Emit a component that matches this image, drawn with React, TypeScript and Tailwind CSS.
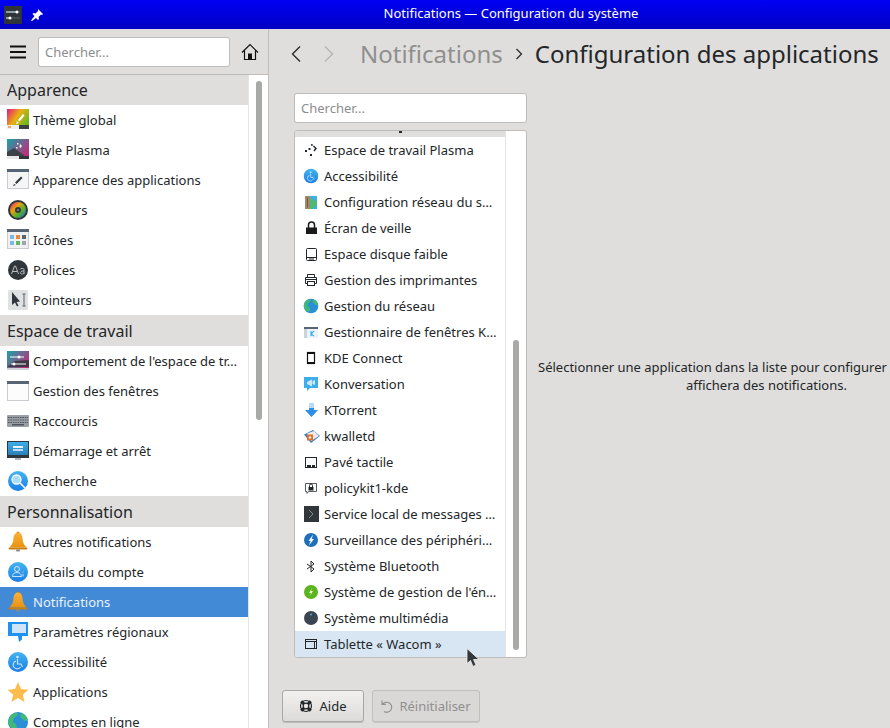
import React from "react";

type P = { children: React.ReactNode; s?: number; vb?: number };
const Svg = ({ children, s = 22, vb = 22 }: P) => (
  <svg width={s} height={s} viewBox={`0 0 ${vb} ${vb}`} className="shrink-0 block">
    {children}
  </svg>
);

const Defs = () => (
  <svg width="0" height="0" className="absolute">
    <defs>
      <linearGradient id="tg" x1="0" y1="0" x2="1" y2="0.6">
        <stop offset="0" stopColor="#e8137f" />
        <stop offset="0.5" stopColor="#e8b010" />
        <stop offset="1" stopColor="#6ab820" />
      </linearGradient>
      <linearGradient id="pl" x1="0" y1="0" x2="1" y2="0.7">
        <stop offset="0" stopColor="#17a5a8" />
        <stop offset="1" stopColor="#c22a78" />
      </linearGradient>
      <linearGradient id="bell" x1="0" y1="0" x2="0" y2="1">
        <stop offset="0" stopColor="#fbb13a" />
        <stop offset="1" stopColor="#e8920f" />
      </linearGradient>
      <linearGradient id="blue" x1="0" y1="0" x2="0" y2="1">
        <stop offset="0" stopColor="#45b4f0" />
        <stop offset="1" stopColor="#1a7ee6" />
      </linearGradient>
      <linearGradient id="screen" x1="0" y1="0" x2="0" y2="1">
        <stop offset="0" stopColor="#3daee9" />
        <stop offset="1" stopColor="#2980b9" />
      </linearGradient>
      <linearGradient id="wheel" x1="0" y1="0" x2="1" y2="1">
        <stop offset="0" stopColor="#e8137f" />
        <stop offset="0.35" stopColor="#e8a010" />
        <stop offset="0.65" stopColor="#4fb030" />
        <stop offset="1" stopColor="#2060d0" />
      </linearGradient>
    </defs>
  </svg>
);

const Bell = ({ s = 22 }: { s?: number }) => (
  <Svg s={s}>
    <circle cx="11" cy="2" r="1.500" fill="#c98010" />
    <path d="M11 1.500c-3.200 0-4.400 3-4.600 6.500-.2 3.400-1.400 6-3.900 8.500h17c-2.500-2.500-3.700-5.100-3.900-8.500C15.400 4.500 14.200 1.500 11 1.500z" fill="url(#bell)" />
    <rect x="1.500" y="16.500" width="19" height="2" rx="1" fill="#c98010" />
    <rect x="9" y="18.500" width="4" height="2" rx="1" fill="#8a8a8a" />
  </Svg>
);
const Access = ({ s = 22 }: { s?: number }) => (
  <Svg s={s}>
    <circle cx="11" cy="11" r="10" fill="url(#blue)" />
    <circle cx="10.500" cy="6" r="1.300" fill="#fff" opacity="0.75" />
    <path d="M10.500 8v5h3.500l1.500 3M9 10a4 4 0 1 0 4.500 6" fill="none" stroke="#fff" strokeWidth="1.100" opacity="0.75" />
  </Svg>
);
const Globe = ({ s = 22 }: { s?: number }) => (
  <Svg s={s}>
    <circle cx="11" cy="11" r="10" fill="#2a8fd6" />
    <path d="M3 5c3-3 6-3.500 8-3l-1 3-3 2-1 4 3 2 1 4-2 2c-4-1-7-5-7-8 0-2 1-4 2-6zM14 2c4 1 6 4 7 7l-3 1-3-2-2-3z" fill="#3fb878" />
  </Svg>
);
const Shift = ({ children }: { children: React.ReactNode }) => <span className="-ml-[1px] mr-[1px] shrink-0">{children}</span>;

const Header = ({ t, tall }: { t: string; tall?: boolean }) => (
  <div className={`bg-[#dfdedc] pl-[7px] text-[16px] text-[#232629] whitespace-nowrap ${tall ? "h-[31px] leading-[32px]" : "h-[30px] leading-[30px]"}`}>{t}</div>
);

const icons: Record<string, React.ReactNode> = {
  theme: (
    <Svg>
      <rect x="0" y="0" width="22" height="20" fill="url(#tg)" />
      <rect x="0" y="16" width="22" height="4" fill="#eeeeee" />
      <rect x="12" y="16" width="10" height="4" fill="#3a3f44" />
      <rect x="1" y="17" width="3" height="2" fill="#f4a868" />
      <path d="M10 12l2 2-3 1zM11 11l5-6 1.500 1.500-5 6z" fill="#fff" />
    </Svg>
  ),
  plasma: (
    <Svg>
      <rect x="0" y="0" width="22" height="20" fill="url(#pl)" />
      <path d="M0 20v-7l7-4 10 7-2 4z" fill="#3c4248" />
      <rect x="0" y="17" width="12" height="3" fill="#e8e8e8" />
      <rect x="12" y="17" width="10" height="3" fill="#30353a" />
      <path d="M13 5l2 2-1.500 2-1-1zM10 4h1.500v1.500H10zM9 8h1.500v1.500H9z" fill="#fff" />
    </Svg>
  ),
  apps: (
    <Svg>
      <rect x="0.500" y="0.500" width="21" height="19" fill="#f5f5f5" stroke="#c8ccd0" />
      <rect x="0" y="0" width="22" height="3" fill="#566573" />
      <path d="M7 15l2 1-3 1zM8 13.500l6-6 1.500 1.500-6 6z" fill="#33383c" />
    </Svg>
  ),
  colors: (
    <Svg>
      <circle cx="11" cy="11" r="10" fill="#31363b" />
      <circle cx="11" cy="11" r="8" fill="url(#wheel)" />
      <circle cx="11" cy="11" r="3" fill="#31363b" />
      <circle cx="11" cy="11" r="1" fill="#8a8f94" />
    </Svg>
  ),
  icones: (
    <Svg>
      <rect x="0.500" y="0.500" width="21" height="19" fill="#eff0f1" stroke="#c8ccd0" />
      <rect x="0" y="0" width="22" height="3" fill="#566573" />
      <rect x="3" y="6" width="4" height="4" fill="#7eb6e8" />
      <rect x="9" y="6" width="4" height="4" fill="#e88a3c" />
      <rect x="15" y="6" width="4" height="4" fill="#566573" />
      <rect x="3" y="12" width="4" height="4" fill="#7eb6e8" />
      <rect x="9" y="12" width="4" height="4" fill="#5fb85f" />
      <rect x="15" y="12" width="4" height="4" fill="#a0a4a8" />
    </Svg>
  ),
  fonts: (
    <Svg>
      <circle cx="11" cy="11" r="10" fill="#31363b" />
      <path d="M4.500 15l3-8h1l3 8M5.500 12.500h5M17 15v-4.500c0-1.500-3.500-1.500-4 0M17 12c-4-.500-4.500 3-2.200 3 1 0 2.200-.500 2.200-1.500" fill="none" stroke="#b8bcc0" strokeWidth="1" />
    </Svg>
  ),
  pointers: (
    <Svg>
      <rect x="1" y="1" width="20" height="20" rx="1.500" fill="#dfe1e3" />
      <path d="M5 3v13l3-2.500 2 4 1.500-1-2-3.500 3.500-.500z" fill="#31363b" />
      <path d="M15.500 5h3M17 5v12M15.500 17h3" fill="none" stroke="#5a6066" strokeWidth="1" />
    </Svg>
  ),
  behaviour: (
    <Svg>
      <rect x="0" y="1" width="22" height="19" fill="url(#pl)" />
      <path d="M0 17l8-6 14-1v7z" fill="#31363b" opacity="0.85" />
      <rect x="0" y="18" width="22" height="2" fill="#d0d4d8" />
      <path d="M3 7h14M4 14h15" stroke="#fff" strokeWidth="1" />
      <circle cx="12" cy="7" r="1.500" fill="#fff" />
      <circle cx="7" cy="14" r="1.500" fill="#fff" />
    </Svg>
  ),
  windows: (
    <Svg>
      <rect x="0.500" y="1.500" width="21" height="19" fill="#fcfcfc" stroke="#c8ccd0" />
      <rect x="0" y="1" width="22" height="3" fill="#566573" />
    </Svg>
  ),
  keys: (
    <Svg>
      <rect x="0" y="5" width="22" height="12" rx="1" fill="#9aa0a6" />
      <path d="M1 7.500h20M1 10h20M1 12.500h20" stroke="#50565c" strokeWidth="1.200" strokeDasharray="1.600 .8" />
      <rect x="5" y="14" width="12" height="1.500" fill="#50565c" />
    </Svg>
  ),
  startup: (
    <Svg>
      <rect x="0" y="1" width="22" height="15" fill="#31363b" />
      <rect x="1" y="2" width="20" height="13" fill="url(#screen)" />
      <rect x="6" y="6" width="10" height="2" fill="#eaf4fb" />
      <rect x="6" y="9" width="10" height="2" fill="#b9dcf2" />
      <rect x="0" y="16" width="22" height="2" fill="#31363b" />
      <rect x="8" y="18" width="6" height="2" fill="#b0b4b8" />
    </Svg>
  ),
  search: (
    <Svg>
      <circle cx="11" cy="11" r="10" fill="url(#blue)" />
      <circle cx="9.500" cy="9.500" r="4.500" fill="#a8dcf8" stroke="#fff" strokeWidth="1.300" />
      <path d="M13 13l5 5" stroke="#fff" strokeWidth="1.600" />
    </Svg>
  ),
  account: (
    <Svg>
      <circle cx="11" cy="11" r="10" fill="url(#blue)" />
      <circle cx="10" cy="8" r="2.500" fill="none" stroke="#fff" strokeWidth="1" opacity="0.75" />
      <path d="M5.500 15.500c0-3 2-4 4.500-4s4 1 4.500 4z" fill="none" stroke="#fff" strokeWidth="1" opacity="0.75" />
      <path d="M16 10.500v1M16 13v2.500" stroke="#fff" strokeWidth="1" opacity="0.75" />
    </Svg>
  ),
  regional: (
    <Svg>
      <path d="M1 1h20v14h-6v3.500L12 21l-1-6H1z" fill="#1e92ee" />
      <rect x="5" y="3" width="14" height="9" fill="#cfe4f7" />
    </Svg>
  ),
  star: (
    <Svg>
      <path d="M11 1l3 7 7.500.700-5.700 5 1.800 7.300L11 17l-6.600 4 1.800-7.300-5.700-5L8 8z" fill="#fdbc4b" />
    </Svg>
  ),
  plasmaSmall: (
    <Svg s={16} vb={16}>
      <path d="M7 2l2 .500-.500 1.500L7 3.500zM10 3.500L13 6.500 10.500 9.500l-1-1L11 6.500 9 4.500zM4.500 6H6.500v2h-2zM1 8h2v2H1zM6 12h2v2H6z" fill="#232629" />
    </Svg>
  ),
  netcfg: (
    <Svg s={16} vb={16}>
      <rect x="1" y="2" width="5" height="13" fill="#a58a6a" />
      <rect x="6" y="2" width="7" height="13" fill="#3daee9" />
      <path d="M6 4l7 3v4l-4 4H6z" fill="#4cb87a" />
      <path d="M3 3.500h1v10H3z" fill="#6e5a42" />
    </Svg>
  ),
  lock: (
    <Svg s={16} vb={16}>
      <rect x="2" y="7.500" width="11" height="6.500" fill="#1a1a1a" />
      <path d="M4.500 8V5a3 3 0 0 1 6 0v3" fill="none" stroke="#1a1a1a" strokeWidth="1.500" />
    </Svg>
  ),
  disk: (
    <Svg s={16} vb={16}>
      <rect x="2.500" y="2.500" width="10" height="12" rx="1" fill="none" stroke="#232629" />
      <path d="M3 11.500h9" stroke="#232629" />
      <rect x="5" y="12.500" width="5" height="1" fill="#232629" />
    </Svg>
  ),
  printer: (
    <Svg s={16} vb={16}>
      <path d="M3.500 5.500v-3h7v3M3.500 11.500h-2v-6h11v6h-2" fill="none" stroke="#232629" />
      <rect x="3.500" y="9.500" width="7" height="4" fill="none" stroke="#232629" />
      <path d="M1.500 7.500h11" stroke="#232629" />
    </Svg>
  ),
  kwin: (
    <Svg s={16} vb={16}>
      <rect x="0" y="3" width="14" height="11" fill="#eaf3fa" />
      <rect x="0" y="3" width="14" height="2" fill="#566573" />
      <path d="M0 5h3v9H0z" fill="#c8d4dc" />
      <path d="M7 7v5M7 10l3-3M7 10l3 2" stroke="#3daee9" strokeWidth="1.100" fill="none" />
    </Svg>
  ),
  phone: (
    <Svg s={16} vb={16}>
      <rect x="3.500" y="2.500" width="7" height="11" fill="none" stroke="#111" strokeWidth="1.200" />
      <rect x="3" y="2" width="8" height="2" fill="#111" />
      <rect x="3" y="12" width="8" height="2" fill="#111" />
    </Svg>
  ),
  konv: (
    <Svg s={16} vb={16}>
      <path d="M0 1h14v11H6l-3 3v-3H0z" fill="#3daee9" />
      <path d="M3 6l5-2.500v7L3 8zM8.500 5L11 4v5L8.500 8z" fill="#cde8f8" />
    </Svg>
  ),
  torrent: (
    <Svg s={16} vb={16}>
      <rect x="5" y="1" width="5" height="6" fill="#b8dcf4" />
      <path d="M1 8h4V6h5v2h4l-6.500 7z" fill="#2c8ee8" />
    </Svg>
  ),
  wallet: (
    <Svg s={16} vb={16}>
      <path d="M0 6.500L9 2l7 6-9 7z" fill="#3a80c8" />
      <path d="M3 5.500L10 3l5 5-8 5z" fill="#f0ece4" />
      <rect x="3" y="6.500" width="6" height="6" fill="#e07030" />
      <circle cx="6" cy="9.500" r="1.200" fill="#f0ece4" />
    </Svg>
  ),
  touchpad: (
    <Svg s={16} vb={16}>
      <rect x="1.500" y="3.500" width="11" height="10" fill="none" stroke="#232629" />
      <rect x="3" y="11" width="4" height="2" fill="#232629" />
      <rect x="8" y="11" width="3" height="2" fill="#232629" />
    </Svg>
  ),
  policy: (
    <Svg s={16} vb={16}>
      <path d="M1.500 3.500h11v8h-8l-1.500 2v-2H1.500z" fill="none" stroke="#555a60" />
      <rect x="4.500" y="7" width="5" height="3.500" fill="#232629" />
      <path d="M5.500 7V5.500a1.500 1.500 0 0 1 3 0V7" fill="none" stroke="#232629" />
    </Svg>
  ),
  terminal: (
    <Svg s={16} vb={16}>
      <rect x="-1" y="0" width="16" height="16" fill="#31363b" />
      <path d="M5 4l4 4-4 4" fill="none" stroke="#7f8c8d" strokeWidth="1" />
    </Svg>
  ),
  thunder: (
    <Svg s={16} vb={16}>
      <circle cx="7" cy="8" r="7" fill="#1c6fb8" />
      <path d="M9 2.500L4.500 9h2L5 13.500 10 7H7.800z" fill="#f4f8fb" />
    </Svg>
  ),
  bt: (
    <Svg s={16} vb={16}>
      <path d="M3 6l7 5-3 3V3l3 3-7 5" fill="none" stroke="#232629" strokeWidth="1" />
    </Svg>
  ),
  power: (
    <Svg s={16} vb={16}>
      <circle cx="7" cy="8" r="7" fill="#5cb41e" />
      <path d="M8 4L5 9h2l-1 3 3-5H7z" fill="#e4f6d2" />
    </Svg>
  ),
  media: (
    <Svg s={16} vb={16}>
      <circle cx="7" cy="8" r="7" fill="#3b4552" />
      <circle cx="7" cy="4.500" r="1" fill="#3daee9" />
    </Svg>
  ),
  tablet: (
    <Svg s={16} vb={16}>
      <rect x="1.500" y="3.500" width="11" height="9" fill="none" stroke="#232629" />
      <path d="M1 5.500h12M10.500 5.500v7" stroke="#232629" />
    </Svg>
  ),
};

const Side = ({ icon, t, active }: { icon: React.ReactNode; t: string; active?: boolean }) => (
  <div className={`h-[30px] flex items-center pl-[7px] gap-[4px] text-[13px] whitespace-nowrap ${active ? "bg-[#4289d6] text-[#eaf3fb]" : "text-[#232629]"}`}>
    {icon}
    <span className="pt-[2px]">{t}</span>
  </div>
);

const Row = ({ icon, t, hover }: { icon: React.ReactNode; t: string; hover?: boolean }) => (
  <div className={`h-[26px] flex items-center pl-[9px] gap-[4px] text-[13px] text-[#232629] whitespace-nowrap ${hover ? "bg-[#d8e6f4]" : ""}`}>
    {icon}
    <span className="pt-[2px]">{t}</span>
  </div>
);

const Search = ({ cls }: { cls: string }) => (
  <div className={`h-[30px] bg-white border border-[#bdbcba] rounded-[3px] px-[6px] pt-[2px] flex items-center text-[13px] text-[#8b8d8f] ${cls}`}>Chercher...</div>
);

export default function App() {
  return (
    <div className="relative w-[890px] h-[728px] overflow-hidden flex flex-col bg-[#dfdedc] font-['Noto_Sans',sans-serif]">
      <Defs />
      {/* Barre de titre */}
      <div className="h-[29px] shrink-0 flex items-center bg-gradient-to-b from-[#0000f4] to-[#0000c4]">
        <div className="ml-[4px] w-[18px] h-[18px] bg-[#2f3439] flex items-center justify-center">
          <svg width="16" height="12" viewBox="0 0 16 12">
            <path d="M1 3h14M1 9h14" stroke="#5a6066" strokeWidth="1" />
            <path d="M1 3h11M1 9h5" stroke="#d8eef9" strokeWidth="1" />
            <circle cx="12" cy="3" r="1.500" fill="#fff" />
            <circle cx="5" cy="9" r="1.500" fill="#fff" />
          </svg>
        </div>
        <svg width="12" height="12" viewBox="0 0 12 12" className="ml-[9px]">
          <path d="M7 0l5 5-1 1-1-.500-2.500 2.500.500 2-1 1-2-2L1 12l-1-.500L3.500 7l-2-2 1-1 2 .500L7 2z" fill="#fff" />
        </svg>
        <div className="flex-1 text-center text-[13px] text-white pl-[89px] -mt-[1px]">Notifications — Configuration du système</div>
      </div>

      <div className="flex-1 flex min-h-0">
        {/* Colonne de gauche */}
        <div className="w-[269px] shrink-0 flex flex-col border-r border-[#c0bfbd]">
          <div className="h-[46px] shrink-0 flex items-center border-b border-[#bdbcba]">
            <svg width="16" height="14" viewBox="0 0 16 14" className="ml-[10px]">
              <path d="M0 1.500h16M0 7h16M0 12.500h16" stroke="#111" strokeWidth="2" />
            </svg>
            <Search cls="ml-[12px] w-[192px] h-[28px]" />
            <svg width="18" height="18" viewBox="0 0 18 18" className="ml-[11px]">
              <path d="M1 9.500L9 1.500l8 8M3.500 7.500v9h11v-9" fill="none" stroke="#111" strokeWidth="1.200" />
              <rect x="7" y="10.500" width="4" height="6" fill="#111" />
            </svg>
          </div>
          <div className="flex-1 min-h-0 flex bg-white">
            <div className="w-[248px] shrink-0">
              <Header t="Apparence" />
              <Side icon={icons.theme} t="Thème global" />
              <Side icon={icons.plasma} t="Style Plasma" />
              <Side icon={icons.apps} t="Apparence des applications" />
              <Side icon={icons.colors} t="Couleurs" />
              <Side icon={icons.icones} t="Icônes" />
              <Side icon={icons.fonts} t="Polices" />
              <Side icon={icons.pointers} t="Pointeurs" />
              <Header t="Espace de travail" tall />
              <Side icon={icons.behaviour} t="Comportement de l'espace de tr…" />
              <Side icon={icons.windows} t="Gestion des fenêtres" />
              <Side icon={icons.keys} t="Raccourcis" />
              <Side icon={icons.startup} t="Démarrage et arrêt" />
              <Side icon={icons.search} t="Recherche" />
              <Header t="Personnalisation" tall />
              <Side icon={<Bell />} t="Autres notifications" />
              <Side icon={icons.account} t="Détails du compte" />
              <Side icon={<Bell />} t="Notifications" active />
              <Side icon={icons.regional} t="Paramètres régionaux" />
              <Side icon={<Access />} t="Accessibilité" />
              <Side icon={icons.star} t="Applications" />
              <Side icon={<Globe />} t="Comptes en ligne" />
            </div>
            <div className="flex-1 border-l border-[#e4e4e4] pl-[7px] pt-[6px]">
              <div className="w-[6px] h-[339px] rounded-[3px] bg-[#a9a9a7]" />
            </div>
          </div>
        </div>

        {/* Partie droite */}
        <div className="flex-1 min-w-0 overflow-hidden flex flex-col">
          <div className="h-[50px] shrink-0 flex items-center text-[24px] whitespace-nowrap">
            <svg width="12" height="18" viewBox="0 0 12 18" className="ml-[21px]">
              <path d="M10 1.500L2.500 9l7.500 7.500" fill="none" stroke="#232629" strokeWidth="1.300" />
            </svg>
            <svg width="12" height="18" viewBox="0 0 12 18" className="ml-[21px]">
              <path d="M2 1.500L9.500 9 2 16.500" fill="none" stroke="#b4b4b2" strokeWidth="1.300" />
            </svg>
            <span className="ml-[25px] text-[#8f8f8e]">Notifications</span>
            <svg width="8" height="12" viewBox="0 0 8 12" className="ml-[12px]">
              <path d="M1.500 1L6.500 6l-5 5" fill="none" stroke="#232629" strokeWidth="1.200" />
            </svg>
            <span className="ml-[12px] text-[#232629]">Configuration des applications</span>
          </div>

          <div className="flex-1 min-h-0 flex">
            <div className="w-[259px] shrink-0 pl-[25px] pt-[14px]">
              <Search cls="w-[233px]" />
              <div className="mt-[7px] w-[233px] h-[528px] bg-white border border-[#bdbcba] rounded-[3px] overflow-hidden flex">
                <div className="w-[210px] shrink-0">
                  <div className="h-[6px] bg-[#dfdedc] flex justify-center">
                    <div className="w-[3px] h-[2px] bg-[#232629]" />
                  </div>
                  <Row icon={icons.plasmaSmall} t="Espace de travail Plasma" />
                  <Row icon={<Shift><Access s={16} /></Shift>} t="Accessibilité" />
                  <Row icon={icons.netcfg} t="Configuration réseau du s…" />
                  <Row icon={icons.lock} t="Écran de veille" />
                  <Row icon={icons.disk} t="Espace disque faible" />
                  <Row icon={icons.printer} t="Gestion des imprimantes" />
                  <Row icon={<Shift><Globe s={16} /></Shift>} t="Gestion du réseau" />
                  <Row icon={icons.kwin} t="Gestionnaire de fenêtres K…" />
                  <Row icon={icons.phone} t="KDE Connect" />
                  <Row icon={icons.konv} t="Konversation" />
                  <Row icon={icons.torrent} t="KTorrent" />
                  <Row icon={icons.wallet} t="kwalletd" />
                  <Row icon={icons.touchpad} t="Pavé tactile" />
                  <Row icon={icons.policy} t="policykit1-kde" />
                  <Row icon={icons.terminal} t="Service local de messages …" />
                  <Row icon={icons.thunder} t="Surveillance des périphéri…" />
                  <Row icon={icons.bt} t="Système Bluetooth" />
                  <Row icon={icons.power} t="Système de gestion de l'én…" />
                  <Row icon={icons.media} t="Système multimédia" />
                  <Row icon={icons.tablet} t="Tablette « Wacom »" hover />
                </div>
                <div className="flex-1 border-l border-[#e4e4e4] pl-[7px] pt-[209px]">
                  <div className="w-[6px] h-[310px] rounded-[3px] bg-[#a9a9a7]" />
                </div>
              </div>
            </div>
            <div className="flex-1 min-w-0 pt-[279px] pl-[10px] text-[13px] leading-[18px] text-[#232629] whitespace-nowrap">
              <div>Sélectionner une application dans la liste pour configurer</div>
              <div className="ml-[148px]">affichera des notifications.</div>
            </div>
          </div>

          <div className="h-[38px] shrink-0 flex items-start pl-[13px] gap-[8px] text-[13px]">
            <div className="w-[82px] h-[32px] pl-[4px] flex items-center justify-center gap-[6px] border border-[#a8a7a5] rounded-[3px] bg-gradient-to-b from-[#f2f1f0] to-[#dcdbd9] text-[#232629] shadow-[0_1px_0_#bdbcba]">
              <svg width="16" height="16" viewBox="0 0 16 16" className="-ml-[6px]">
                <circle cx="8" cy="8" r="5.500" fill="none" stroke="#232629" strokeWidth="1.200" />
                <circle cx="8" cy="8" r="2.800" fill="none" stroke="#232629" strokeWidth="1.200" />
                <path d="M3.200 3.200l2.800 2.800M12.800 3.200L10 6M3.200 12.800L6 10M12.800 12.800L10 10" stroke="#232629" strokeWidth="3" />
              </svg>
              <span className="pt-[2px]">Aide</span>
            </div>
            <div className="w-[108px] h-[32px] pr-[2px] flex items-center justify-center gap-[6px] border border-[#c0bfbd] rounded-[3px] bg-[#d9d8d6] text-[#8f8f8e] shadow-[0_1px_0_#c8c7c5]">
              <svg width="14" height="14" viewBox="0 0 14 14">
                <path d="M3 1.500v4h4M3.500 5.500a5 5 0 1 1 1.500 7" fill="none" stroke="#8f8f8e" strokeWidth="1.100" />
              </svg>
              <span className="pt-[2px]">Réinitialiser</span>
            </div>
          </div>
        </div>
      </div>

      {/* Curseur de la souris */}
      <svg width="14" height="20" viewBox="0 0 14 20" className="absolute left-[466px] top-[648px]">
        <path d="M1 0.500v15l3.500-3 2.500 6 3-1.500-2.500-5.500H13z" fill="#33383c" stroke="#eef0f1" strokeWidth="0.800" />
      </svg>
    </div>
  );
}
